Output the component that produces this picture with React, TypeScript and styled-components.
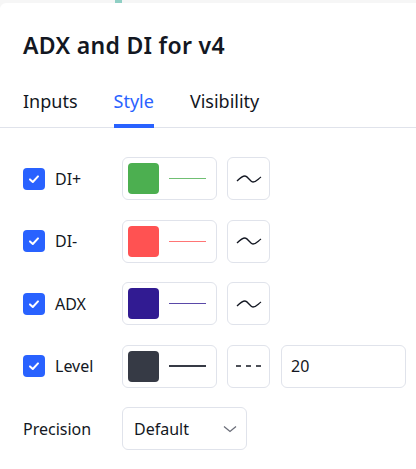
import styled, { createGlobalStyle } from "styled-components"

const GlobalStyle = createGlobalStyle`
  html, body {
    margin: 0;
    padding: 0;
    background: #ffffff;
  }
  body {
    font-family: "Noto Sans", "Open Sans", sans-serif;
    color: #131722;
  }
`

interface PlotRow {
  label: string
  color: string
  lineWidth: number
  kind: "wave" | "dashed"
  value?: string
}

const rows: PlotRow[] = [
  { label: "DI+", color: "#4caf50", lineWidth: 1, kind: "wave" },
  { label: "DI-", color: "#ff5252", lineWidth: 1, kind: "wave" },
  { label: "ADX", color: "#311b92", lineWidth: 1, kind: "wave" },
  { label: "Level", color: "#363a45", lineWidth: 2, kind: "dashed", value: "20" },
]

const WaveIcon = () => (
  <svg width="26" height="10" viewBox="0 0 26 10">
    <path d="M1 7 C4 4 6 2 9 2 C12 2 14 8 17 8 C20 8 22 5 25 3" fill="none" stroke="#131722" strokeWidth="1.3" />
  </svg>
)

const DashIcon = () => (
  <svg width="28" height="4" viewBox="0 0 28 4">
    <line x1="1" y1="2" x2="27" y2="2" stroke="#131722" strokeWidth="1.3" strokeDasharray="5 5" />
  </svg>
)

const CheckIcon = () => (
  <svg width="14" height="14" viewBox="0 0 14 14">
    <path d="M3 7.4 L5.8 10 L11 4.4" fill="none" stroke="#ffffff" strokeWidth="2" strokeLinecap="round" strokeLinejoin="round" />
  </svg>
)

const Chevron = () => (
  <svg width="14" height="8" viewBox="0 0 14 8">
    <path d="M1 1.5 L7 6.5 L13 1.5" fill="none" stroke="#6a6d78" strokeWidth="1.3" />
  </svg>
)

export default function App() {
  return (
    <>
      <GlobalStyle />
      <Page>
        <TopStrip>
          <StripMark />
        </TopStrip>
        <Panel>
          <Title>ADX and DI for v4</Title>
          <Tabs>
            <Tab>Inputs</Tab>
            <Tab $active>Style</Tab>
            <Tab>Visibility</Tab>
          </Tabs>
          <Content>
            {rows.map((r) => (
              <Row key={r.label}>
                <LabelCell>
                  <Checkbox>
                    <CheckIcon />
                  </Checkbox>
                  <Label>{r.label}</Label>
                </LabelCell>
                <ColorButton>
                  <Swatch $color={r.color} />
                  <LinePreview $color={r.color} $width={r.lineWidth} />
                </ColorButton>
                <IconButton>{r.kind === "wave" ? <WaveIcon /> : <DashIcon />}</IconButton>
                {r.value && <NumberInput>{r.value}</NumberInput>}
              </Row>
            ))}
            <Row>
              <LabelCell>
                <Label>Precision</Label>
              </LabelCell>
              <Select>
                <span>Default</span>
                <Chevron />
              </Select>
            </Row>
          </Content>
        </Panel>
      </Page>
    </>
  )
}

const Page = styled.div`
  width: 416px;
  height: 469px;
  display: flex;
  flex-direction: column;
  background: #f6f6f6;
  overflow: hidden;
`

const TopStrip = styled.div`
  height: 3px;
  position: relative;
  flex: none;
`

const StripMark = styled.div`
  position: absolute;
  left: 115px;
  top: 0;
  width: 7px;
  height: 3px;
  background: #8fcfc4;
`

const Panel = styled.div`
  flex: 1;
  background: #ffffff;
  border-top-left-radius: 6px;
  display: flex;
  flex-direction: column;
`

const Title = styled.h2`
  margin: 0;
  padding: 28px 23px 0;
  font-size: 23px;
  line-height: 28px;
  font-weight: 600;
  letter-spacing: 0.3px;
  color: #131722;
`

const Tabs = styled.nav`
  display: flex;
  gap: 36px;
  padding: 0 23px;
  margin-top: 30px;
  border-bottom: 1px solid #e0e3eb;
`

const Tab = styled.div<{ $active?: boolean }>`
  font-size: 18px;
  line-height: 24px;
  padding-bottom: 11px;
  color: ${(p) => (p.$active ? "#2962ff" : "#131722")};
  border-bottom: 4px solid ${(p) => (p.$active ? "#2962ff" : "transparent")};
  margin-bottom: -1px;
`

const Content = styled.div`
  display: flex;
  flex-direction: column;
  gap: 19.5px;
  padding: 29px 0 0 23px;
`

const Row = styled.div`
  display: flex;
  align-items: center;
  height: 43px;
  gap: 10px;

  & > * {
    flex: none;
  }
`

const LabelCell = styled.div`
  width: 89px;
  display: flex;
  align-items: center;
  gap: 10px;
`

const Checkbox = styled.div`
  width: 22px;
  height: 22px;
  border-radius: 4px;
  background: #2962ff;
  display: flex;
  align-items: center;
  justify-content: center;
`

const Label = styled.span`
  font-size: 16px;
  color: #131722;
`

const Frame = styled.div`
  box-sizing: border-box;
  height: 43px;
  border: 1px solid #e0e3eb;
  border-radius: 6px;
  background: #ffffff;
  display: flex;
  align-items: center;
`

const ColorButton = styled(Frame)`
  width: 95px;
  padding: 0 10px 0 5px;
  gap: 10px;
`

const Swatch = styled.div<{ $color: string }>`
  width: 31px;
  height: 31px;
  border-radius: 4px;
  background: ${(p) => p.$color};
`

const LinePreview = styled.div<{ $color: string; $width: number }>`
  flex: 1;
  height: ${(p) => p.$width}px;
  background: ${(p) => p.$color};
  opacity: ${(p) => (p.$width > 1 ? 1 : 0.8)};
`

const IconButton = styled(Frame)`
  width: 43px;
  justify-content: center;
`

const NumberInput = styled(Frame)`
  width: 125px;
  padding: 0 9px;
  font-size: 16px;
  margin-left: 1px;
`

const Select = styled(Frame)`
  width: 125px;
  padding: 0 9px 0 11px;
  justify-content: space-between;
  font-size: 16px;
`
